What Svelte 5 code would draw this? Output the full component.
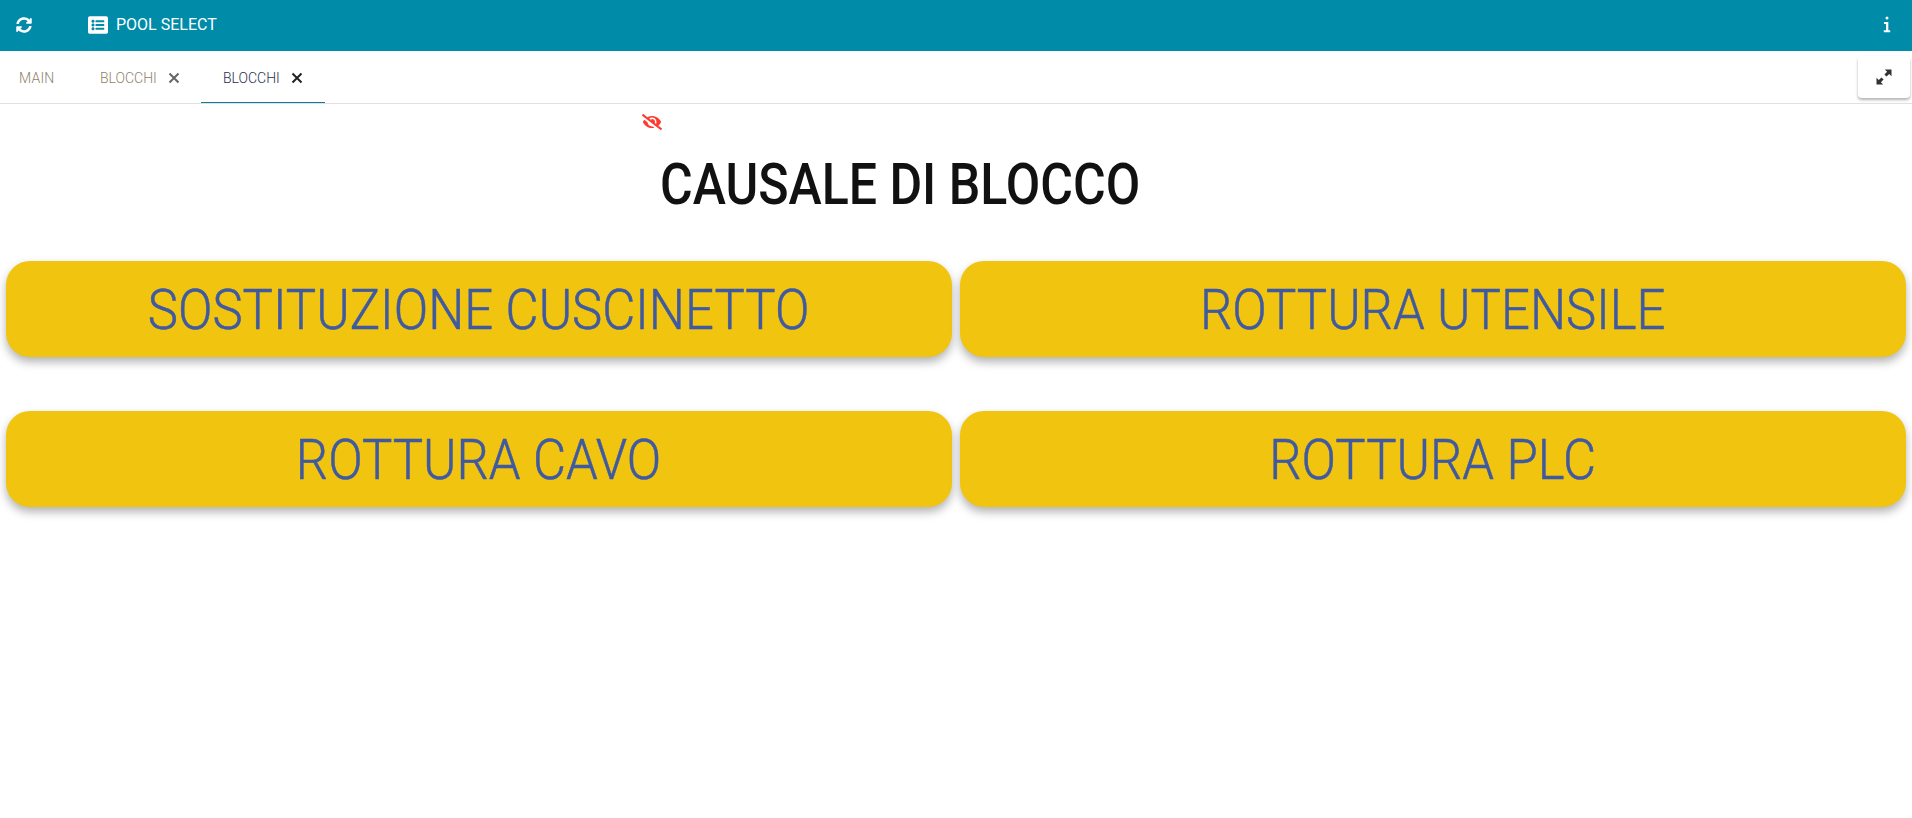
<script>
  const causes = ['SOSTITUZIONE CUSCINETTO', 'ROTTURA UTENSILE', 'ROTTURA CAVO', 'ROTTURA PLC'];
</script>

<div class="page">
  <header class="top">
    <svg class="sync" viewBox="0 0 512 512"><path fill="currentColor" d="M370.72 133.28C339.458 104.008 298.888 87.962 255.848 88c-77.458.068-144.328 53.178-162.791 126.85-1.344 5.363-6.122 9.15-11.651 9.15H24.103c-7.498 0-13.194-6.807-11.807-14.176C33.933 94.924 134.813 8 256 8c66.448 0 126.791 26.136 171.315 68.685L463.03 40.97C478.149 25.851 504 36.559 504 57.941V192c0 13.255-10.745 24-24 24H345.941c-21.382 0-32.09-25.851-16.971-40.971l41.75-41.749zM32 296h134.059c21.382 0 32.09 25.851 16.971 40.971l-41.75 41.75c31.262 29.273 71.835 45.319 114.876 45.28 77.418-.07 144.315-53.144 162.787-126.849 1.344-5.363 6.122-9.15 11.651-9.15h57.304c7.498 0 13.194 6.807 11.807 14.176C478.067 417.076 377.187 504 256 504c-66.448 0-126.791-26.136-171.315-68.685L48.97 471.03C33.851 486.149 8 475.441 8 454.059V320c0-13.255 10.745-24 24-24z"/></svg>
    <svg class="list" viewBox="0 0 512 512"><path fill="currentColor" d="M464 480H48c-26.51 0-48-21.49-48-48V80c0-26.51 21.49-48 48-48h416c26.51 0 48 21.49 48 48v352c0 26.51-21.49 48-48 48zM128 120c-22.091 0-40 17.909-40 40s17.909 40 40 40 40-17.909 40-40-17.909-40-40-40zm0 96c-22.091 0-40 17.909-40 40s17.909 40 40 40 40-17.909 40-40-17.909-40-40-40zm0 96c-22.091 0-40 17.909-40 40s17.909 40 40 40 40-17.909 40-40-17.909-40-40-40zm288-136v-32c0-6.627-5.373-12-12-12H204c-6.627 0-12 5.373-12 12v32c0 6.627 5.373 12 12 12h200c6.627 0 12-5.373 12-12zm0 96v-32c0-6.627-5.373-12-12-12H204c-6.627 0-12 5.373-12 12v32c0 6.627 5.373 12 12 12h200c6.627 0 12-5.373 12-12zm0 96v-32c0-6.627-5.373-12-12-12H204c-6.627 0-12 5.373-12 12v32c0 6.627 5.373 12 12 12h200c6.627 0 12-5.373 12-12z"/></svg>
    <span class="brand">POOL SELECT</span>
    <svg class="info" viewBox="0 0 8 18"><circle cx="4" cy="2" r="1.6" fill="currentColor"/><path fill="currentColor" d="M.8 6.4h4.6v8.8h2v2H.6v-2h2.4V8.4H.8z"/></svg>
  </header>

  <nav class="tabs">
    <span class="tab main">MAIN</span>
    <span class="tab second">BLOCCHI<svg class="x" viewBox="0 0 12 12"><path d="M1.5 1.5l9 9M10.5 1.5l-9 9"/></svg></span>
    <span class="tab active">BLOCCHI<svg class="x" viewBox="0 0 12 12"><path d="M1.5 1.5l9 9M10.5 1.5l-9 9"/></svg></span>
    <button class="expand" aria-label="Espandi">
      <svg viewBox="0 0 16 16"><path fill="currentColor" d="M8.8.5h6.7v6.7l-2.3-2.3-2.7 2.7-2.1-2.1 2.7-2.7zM7.2 15.500H.5V8.800l2.3 2.300 2.700-2.700 2.100 2.100-2.700 2.700z"/></svg>
    </button>
  </nav>

  <main class="content">
    <svg class="eye" viewBox="0 0 640 512"><path fill="currentColor" d="M320 400c-75.85 0-137.25-58.71-142.9-133.11L72.2 185.82c-13.79 17.3-26.48 35.59-36.72 55.59a32.35 32.35 0 0 0 0 29.19C89.71 376.41 197.07 448 320 448c26.91 0 52.87-4 77.89-10.46L346 397.39a144.13 144.13 0 0 1-26 2.61zm313.82 58.1l-110.55-85.44a331.25 331.25 0 0 0 81.25-102.07 32.35 32.35 0 0 0 0-29.19C550.29 135.59 442.93 64 320 64a308.15 308.15 0 0 0-147.32 37.7L45.46 3.37A16 16 0 0 0 23 6.18L3.37 31.45A16 16 0 0 0 6.18 53.9l588.36 454.73a16 16 0 0 0 22.46-2.81l19.64-25.27a16 16 0 0 0-2.82-22.45zm-183.72-142l-39.3-30.38A94.75 94.75 0 0 0 416 256a94.76 94.76 0 0 0-121.31-92.21A47.65 47.65 0 0 1 304 192a46.64 46.64 0 0 1-1.54 10l-73.61-56.89A142.31 142.31 0 0 1 320 112a143.92 143.92 0 0 1 144 144c0 21.63-5.29 41.79-13.9 60.11z"/></svg>
    <h1>CAUSALE DI BLOCCO</h1>
    <div class="grid">
      {#each causes as cause}
        <button class="cause"><span>{cause}</span></button>
      {/each}
    </div>
  </main>
</div>

<style>
  :global(body) { margin: 0; background: #fff; }
  .page { font-family: "Roboto", "Open Sans", sans-serif; height: 818px; overflow: hidden; }
  .top { height: 51px; background: #008ba8; color: #fff; display: flex; align-items: center; }
  .sync { width: 16px; height: 16px; margin-left: 16px; margin-top: -2px; }
  .list { width: 20px; height: 20px; margin-left: 56px; margin-top: -2px; }
  .brand { font-size: 16px; font-weight: 400; margin-left: 8px; margin-top: -2px; }
  .info { width: 8px; height: 17px; margin-left: auto; margin-right: 21px; margin-top: -2px; }
  .tabs { height: 51px; margin-top: 1px; border-bottom: 1px solid #e0e0e0; display: flex; align-items: stretch; position: relative; }
  .tab { display: flex; align-items: center; font-size: 14px; font-weight: 300; color: #8f7f6c; box-sizing: border-box; padding-top: 1px; }
  .main { margin-left: 19px; width: 81px; letter-spacing: .2px; }
  .second { width: 101px; gap: 11px; }
  .second .x { stroke: #666; }
  .active { width: 124px; padding-left: 22px; gap: 11px; color: #1f2d4d; border-bottom: 1px solid #0e7c96; }
  .active .x { stroke: #222; }
  .x { width: 12px; height: 12px; fill: none; stroke-width: 2; }
  .expand { position: absolute; right: 2px; top: 4px; width: 52px; height: 42px; background: #fff; border: 0; border-radius: 4px; box-shadow: 0 2px 3px rgba(0,0,0,.3); color: #333; display: flex; align-items: center; justify-content: center; padding: 0; }
  .expand svg { width: 16px; height: 16px; }
  .content { padding: 10px 6px 0; display: flex; flex-direction: column; align-items: flex-start; }
  .eye { width: 20px; height: 16px; margin-left: 636px; color: #ff3b30; display: block; }
  h1 { margin: 21px 0 0 654px; font-size: 58px; line-height: 66px; font-weight: 500; color: #111; white-space: nowrap; transform: scaleX(.863); transform-origin: left center; }
  .grid { margin-top: 44px; width: 100%; display: grid; grid-template-columns: 946px 946px; column-gap: 8px; row-gap: 54px; }
  .cause { height: 96px; border: 0; border-radius: 24px; background: #f1c40f; color: #3f5aa0; font: 300 55px/1 "Roboto", sans-serif; -webkit-text-stroke: .5px #3f5aa0; box-shadow: 0 5px 10px rgba(0,0,0,.3); padding: 3px 0 0; }
  .cause span { display: inline-block; transform: scaleX(.925); }
</style>
